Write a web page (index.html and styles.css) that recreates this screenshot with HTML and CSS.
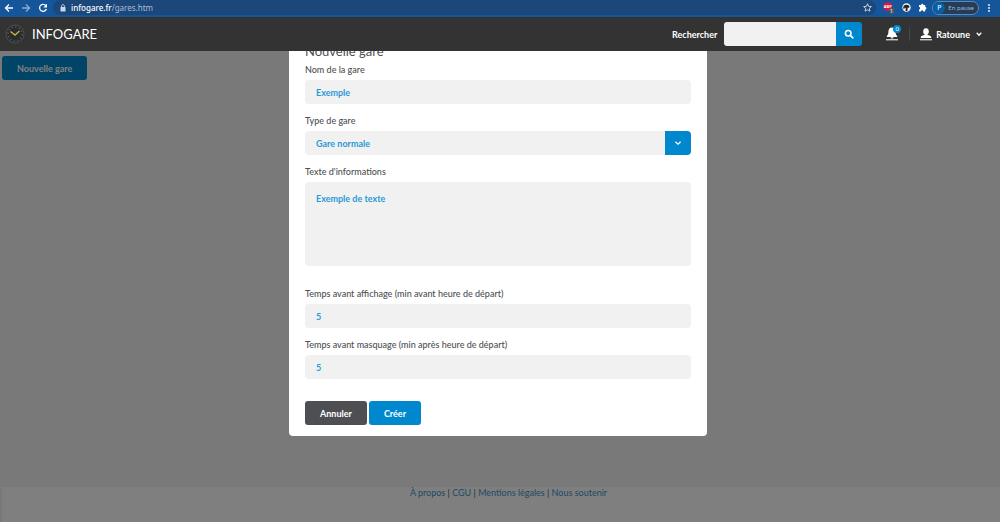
FILE: index.html
```html
<!DOCTYPE html>
<html lang="fr">
<head>
  <meta charset="UTF-8">
  <title>INFOGARE - Gares</title>
  <link rel="stylesheet" href="styles.css">
</head>

<body>
  <!-- Browser bar -->
  <div class="browser">
    <button class="browser-btn" aria-label="Retour"><svg width="10" height="10" viewBox="0 0 10 10"><path d="M9 5H1.5M5 1.5L1.5 5L5 8.5" /></svg></button>
    <button class="browser-btn dim" aria-label="Avancer"><svg width="10" height="10" viewBox="0 0 10 10"><path d="M1 5H8.5M5 1.5L8.5 5L5 8.5" /></svg></button>
    <button class="browser-btn" aria-label="Actualiser"><svg width="10" height="10" viewBox="0 0 10 10"><path d="M8 2.8A3.5 3.5 0 1 0 8.4 6" /><path class="fill" d="M9 0.8V4.4H5.4Z" /></svg></button>
    <div class="address">
      <svg width="6" height="8" viewBox="0 0 6 8"><rect x="0.5" y="3" width="5" height="4.5" rx="0.5" fill="#c9d8e8" /><path d="M1.6 3V2a1.4 1.4 0 0 1 2.8 0V3" fill="none" stroke="#c9d8e8" stroke-width="0.8" /></svg>
      <span class="url"><b>infogare.fr</b>/gares.htm</span>
      <svg width="9" height="9" viewBox="0 0 10 10"><path d="M5 0.8L6.2 3.7L9.3 4L7 6L7.7 9.1L5 7.5L2.3 9.1L3 6L0.7 4L3.8 3.7Z" fill="none" stroke="#d5e0ec" stroke-width="1" /></svg>
    </div>
    <div class="extensions">
      <svg width="12" height="12" viewBox="0 0 12 12"><path d="M2.8 0.5H6.8L9.3 3V6L6.8 8.5H2.8L0.4 6V3Z" fill="#e8113c" /><text x="4.8" y="6" font-size="4" font-weight="bold" text-anchor="middle" fill="#fff">ABP</text><rect x="6" y="6" width="5" height="6" rx="1" fill="#555" /><text x="8.5" y="11" font-size="5" text-anchor="middle" fill="#fff">1</text></svg>
      <svg width="9" height="9" viewBox="0 0 9 9"><circle cx="4.5" cy="4.5" r="4.2" fill="#f2f2f2" /><path d="M1.3 5A3.2 3 0 0 1 7.6 4L6.6 5L5.8 4.2L5.4 8H3.6L3.8 5.2L2.8 4.6L2 6.4Z" fill="#222" /></svg>
      <svg width="9" height="9" viewBox="0 0 9 9"><path d="M1 2H3A1.2 1.2 0 1 1 5.4 2H7.2V4A1.2 1.2 0 1 1 7.2 6.4V8.5H5.3A1.2 1.2 0 0 0 2.9 8.5H1V6.4A1.2 1.2 0 0 0 1 4Z" fill="#fff" /></svg>
    </div>
    <button class="profile"><span class="profile-pic">P</span>En pause</button>
    <button class="browser-btn menu" aria-label="Menu"><svg width="4" height="10" viewBox="0 0 4 10"><circle class="fill" cx="2" cy="2" r="0.9" /><circle class="fill" cx="2" cy="5" r="0.9" /><circle class="fill" cx="2" cy="8" r="0.9" /></svg></button>
  </div>

  <!-- Header -->
  <header>
    <a class="logo" href="#">
      <svg width="20" height="20" viewBox="0 0 20 20">
        <circle cx="10" cy="10" r="9" fill="#292b2d" stroke="#4c4f51" stroke-width="1" />
        <circle cx="10" cy="10" r="7" fill="none" stroke="#53585b" stroke-width="1.6" stroke-dasharray="1.4 2.26" />
        <path d="M5.5 7.5L10 11L14.5 7" fill="none" stroke="#c9b336" stroke-width="1.4" />
      </svg>
      INFOGARE
    </a>
    <form class="search">
      <label for="search">Rechercher</label>
      <input type="text" id="search">
      <button type="button" aria-label="Rechercher"><svg width="10" height="10" viewBox="0 0 10 10"><circle cx="4.2" cy="4.2" r="2.8" fill="none" stroke="#fff" stroke-width="1.5" /><path d="M6.3 6.3L8.8 8.8" stroke="#fff" stroke-width="1.7" stroke-linecap="round" /></svg></button>
    </form>
    <button class="bell" aria-label="Notifications">
      <svg width="14" height="14" viewBox="0 0 14 14"><path d="M7 0.5C4.4 0.5 3.4 2.6 3.4 4.8C3.4 7.2 2.8 8 1.8 9V10H12.2V9C11.2 8 10.6 7.2 10.6 4.8C10.6 2.6 9.6 0.5 7 0.5ZM5.4 10.3A1.6 1.2 0 0 0 8.6 10.3Z" fill="#fff" /><rect x="1" y="12" width="12" height="1.4" fill="#ccc" /></svg>
      <span class="badge">0</span>
    </button>
    <button class="user">
      <svg width="12" height="14" viewBox="0 0 12 14"><ellipse cx="6" cy="4.6" rx="2.8" ry="3.4" fill="#fff" /><path d="M0.8 11V10C0.8 8.8 3 8.4 4.6 7.8H7.4C9 8.4 11.2 8.8 11.2 10V11Z" fill="#fff" /><rect x="0" y="12" width="12" height="1.4" fill="#ccc" /></svg>
      Ratoune
      <svg class="chevron" width="6" height="6" viewBox="0 0 6 6"><path d="M0.7 1.8L3 4.2L5.3 1.8" /></svg>
    </button>
  </header>

  <!-- Page content -->
  <main>
    <button class="btn btn-blue">Nouvelle gare</button>
  </main>

  <footer>
    <a href="#">À propos</a> | <a href="#">CGU</a> | <a href="#">Mentions légales</a> | <a href="#">Nous soutenir</a>
  </footer>

  <!-- New station popup -->
  <div class="overlay">
    <form class="modal">
      <h2>Nouvelle gare</h2>
      <div class="field">
        <label for="name">Nom de la gare</label>
        <input type="text" id="name" value="Exemple">
      </div>
      <div class="field">
        <label for="type">Type de gare</label>
        <div class="select">
          <select id="type">
            <option>Gare normale</option>
          </select>
          <span class="arrow"><svg class="chevron" width="8" height="8" viewBox="0 0 8 8"><path d="M1.4 2.8L4 5.2L6.6 2.8" /></svg></span>
        </div>
      </div>
      <div class="field field-text">
        <label for="infos">Texte d'informations</label>
        <textarea id="infos">Exemple de texte</textarea>
      </div>
      <div class="field">
        <label for="show">Temps avant affichage (min avant heure de départ)</label>
        <input type="text" id="show" value="5">
      </div>
      <div class="field">
        <label for="hide">Temps avant masquage (min après heure de départ)</label>
        <input type="text" id="hide" value="5">
      </div>
      <div class="actions">
        <button type="button" class="btn btn-grey">Annuler</button>
        <button type="button" class="btn btn-blue">Créer</button>
      </div>
    </form>
  </div>
</body>
</html>
```
FILE: styles.css
```css
* {
  box-sizing: border-box;
}

body {
  margin: 0;
  min-height: 100vh;
  display: flex;
  flex-direction: column;
  background-color: #f3f3f3;
  font-family: Lato, sans-serif;
  font-size: 9px;
  color: #4d4f53;
}

button, input, select, textarea {
  font-family: inherit;
  font-size: inherit;
  border: none;
  margin: 0;
}

button {
  cursor: pointer;
}

svg {
  display: block;
  flex-shrink: 0;
}

/* Browser bar */
.browser {
  position: relative;
  z-index: 2;
  height: 17px;
  padding: 0 9px 2px 0;
  display: flex;
  align-items: center;
  background-color: #15569b;
  font-family: "Noto Sans", sans-serif;
  font-size: 8px;
  color: white;
}

.browser-btn {
  width: 17px;
  padding: 0;
  display: flex;
  justify-content: center;
  background: none;
}

.browser-btn path {
  fill: none;
  stroke: white;
  stroke-width: 1.3;
}

.browser-btn .fill {
  fill: white;
  stroke: none;
}

.dim {
  opacity: 0.5;
}

.address {
  flex: 1;
  height: 15px;
  margin-left: 2px;
  padding: 0 4px 0 7px;
  display: flex;
  align-items: center;
  gap: 5px;
  border-radius: 8px;
  background-color: #1b477a;
}

.url {
  flex: 1;
  color: #a9bdd4;
}

.url b {
  font-weight: 500;
  color: white;
}

.extensions {
  padding: 0 5px 0 7px;
  display: flex;
  align-items: center;
  gap: 7px;
}

.profile {
  height: 14px;
  padding: 0 4px 0 0;
  display: flex;
  align-items: center;
  gap: 3px;
  border: 1px solid #5f88b8;
  border-radius: 7px;
  background-color: #263c55;
  font-size: 6px;
  color: #9dbbe0;
}

.profile-pic {
  width: 12px;
  line-height: 12px;
  border-radius: 50%;
  background-color: #0560a5;
  font-size: 7px;
  color: white;
}

.menu {
  width: 4px;
  margin-left: 8px;
}

/* Header */
header {
  position: relative;
  z-index: 2;
  height: 34px;
  padding: 0 18px 0 5px;
  display: flex;
  align-items: center;
  background-color: #333;
  color: white;
}

.logo {
  margin-right: auto;
  display: flex;
  align-items: center;
  gap: 7px;
  font-size: 13px;
  color: white;
  text-decoration: none;
}

.search {
  display: flex;
  align-items: center;
  font-weight: bold;
}

.search input {
  width: 112px;
  height: 24px;
  margin-left: 7px;
  padding: 0 8px;
  border-radius: 3px 0 0 3px;
  background-color: #f1f1f1;
}

.search button {
  width: 26px;
  height: 24px;
  padding: 0 8px;
  border-radius: 0 3px 3px 0;
  background-color: #0088ce;
}

.bell {
  position: relative;
  margin-left: 23px;
  padding: 0;
  background: none;
}

.badge {
  position: absolute;
  top: -2px;
  right: -2px;
  width: 8px;
  line-height: 8px;
  border-radius: 50%;
  background-color: #0088ce;
  font-size: 6px;
  color: white;
}

.user {
  height: 14px;
  margin-left: 10px;
  padding: 0 0 0 10px;
  display: flex;
  align-items: center;
  gap: 4px;
  border-left: 1px solid #484848;
  background: none;
  font-weight: bold;
  color: white;
}

.user .chevron {
  margin-left: 2px;
}

.chevron path {
  fill: none;
  stroke: white;
  stroke-width: 1.3;
}

/* Page content */
main {
  flex: 1;
  padding: 5px 2px;
}

.btn {
  height: 24px;
  padding: 0 15px;
  border-radius: 3px;
  font-weight: bold;
  color: white;
}

.btn-blue {
  background-color: #0088ce;
}

.btn-grey {
  background-color: #4d4f53;
}

footer {
  height: 35px;
  margin-left: 2px;
  padding-left: 15px;
  background-color: white;
  text-align: center;
  line-height: 11px;
}

footer a {
  color: #3a96cc;
  text-decoration: none;
}

/* Popup */
.overlay {
  position: fixed;
  inset: 0;
  z-index: 1;
  padding: 41px 4px 0 0;
  display: flex;
  justify-content: center;
  align-items: flex-start;
  background-color: rgba(0, 0, 0, 0.5);
}

.modal {
  width: 100%;
  max-width: 418px;
  padding: 0 16px 11px;
  border-radius: 4px;
  background-color: white;
}

.modal h2 {
  margin: 0 0 2px;
  font-size: 13px;
  font-weight: normal;
  line-height: 20px;
}

.field {
  margin-bottom: 10px;
  display: flex;
  flex-direction: column;
  gap: 3px;
}

.field label {
  line-height: 14px;
  font-weight: 500;
}

.field input, .field select, .field textarea {
  width: 100%;
  height: 24px;
  padding: 0 11px;
  border-radius: 4px;
  background-color: #f1f1f1;
  font-weight: bold;
  color: #2a9ad6;
}

.select {
  display: flex;
}

.field select {
  appearance: none;
  border-radius: 4px 0 0 4px;
}

.arrow {
  width: 26px;
  flex-shrink: 0;
  display: flex;
  justify-content: center;
  align-items: center;
  border-radius: 0 4px 4px 0;
  background-color: #0088ce;
}

.field textarea {
  height: 84px;
  padding-top: 11px;
  resize: none;
}

.field-text {
  margin-bottom: 21px;
}

.actions {
  padding-top: 12px;
  display: flex;
  gap: 2px;
}
```
